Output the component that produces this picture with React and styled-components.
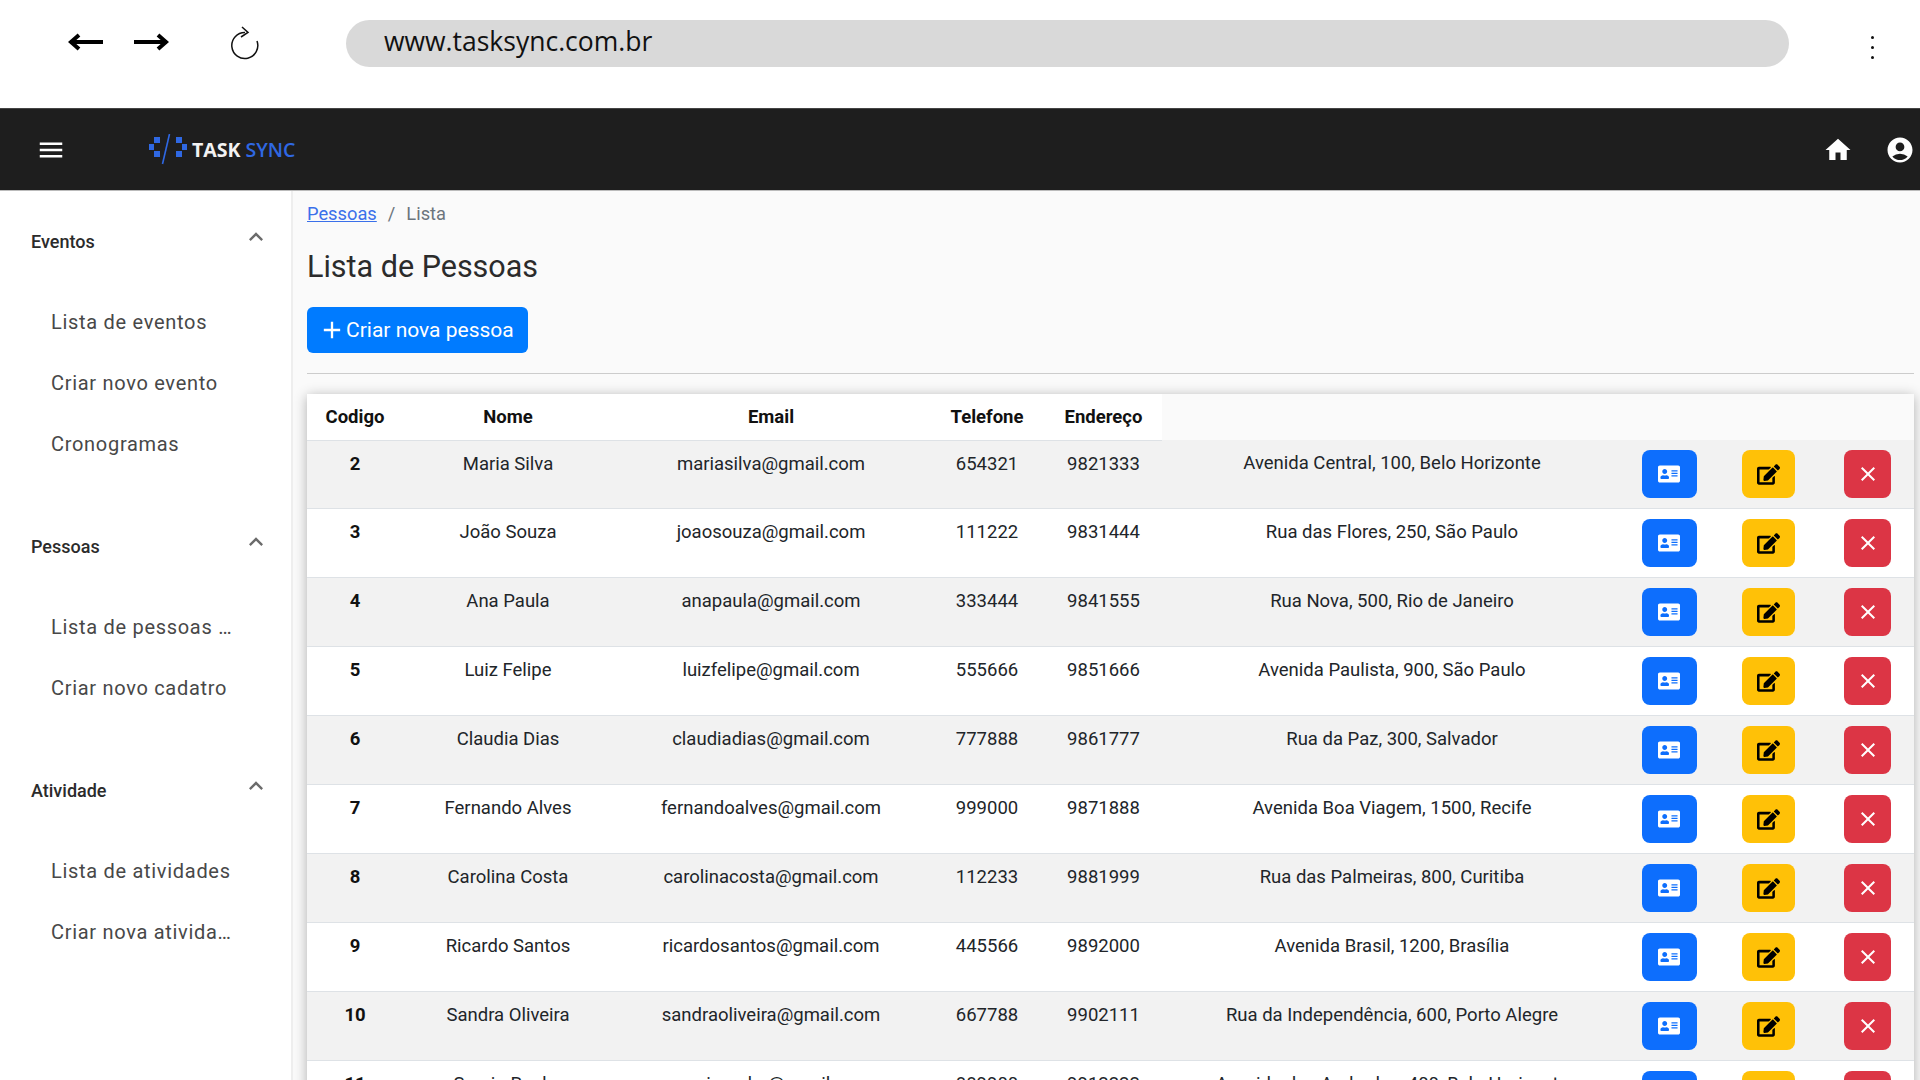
import React from "react";
import styled, { createGlobalStyle } from "styled-components";
import { MdMenu, MdHome, MdAccountCircle, MdExpandLess, MdAdd, MdClose } from "react-icons/md";
import { FaAddressCard, FaEdit } from "react-icons/fa";

const GlobalStyle = createGlobalStyle`
  html, body {
    margin: 0;
    width: 1920px;
    height: 1080px;
    overflow: hidden;
    background: #fff;
    font-family: Roboto, "Liberation Sans", sans-serif;
  }
  * { box-sizing: border-box; }
`;

const BrowserBar = styled.div`
  height: 108px;
  background: #fff;
  display: flex;
  align-items: flex-start;
  padding: 20px 0 0 68px;
`;

const ArrowIcon = styled.svg`
  width: 35px;
  height: 20px;
  margin: 12px 31px 0 0;
  display: block;
`;

const RefreshIcon = styled.svg`
  width: 30px;
  height: 34px;
  margin: 6px 86px 0 30px;
  display: block;
`;

const AddressBar = styled.div`
  width: 1443px;
  height: 47px;
  border-radius: 24px;
  background: #d9d9d9;
  padding-left: 38px;
  font-family: "Open Sans", sans-serif;
  font-size: 26.5px;
  line-height: 42px;
  color: #111;
`;

const Kebab = styled.div`
  margin: 16px 0 0 82px;
  display: flex;
  flex-direction: column;
  gap: 7px;

  span {
    display: block;
    width: 3px;
    height: 3px;
    border-radius: 50%;
    background: #111;
  }
`;

const Navbar = styled.header`
  height: 83px;
  background: #1e1e1e;
  border-top: 1px solid #444;
  border-bottom: 1px solid #bbb;
  display: flex;
  align-items: center;
  color: #fff;
  padding: 0 5px 0 36px;
`;

const Logo = styled.div`
  display: flex;
  align-items: center;
  margin-left: 80px;
  font-family: "Open Sans", sans-serif;
  font-size: 19.5px;
  line-height: 1;
`;

const LogoTask = styled.span`
  font-weight: 700;
  color: #f2f2f2;
  margin-left: 2px;
`;

const LogoSync = styled.span`
  font-weight: 600;
  color: #2f68e3;
  margin-left: 5px;
`;

const NavRight = styled.div`
  margin-left: auto;
  display: flex;
  align-items: center;
  gap: 32px;
`;

const Layout = styled.div`
  display: grid;
  grid-template-columns: 293px 1fr;
  height: 889px;
  overflow: hidden;
`;

const Sidebar = styled.aside`
  background: #fff;
  border-right: 2px solid #eee;
  padding-top: 20px;
`;

const Group = styled.section`
  margin-bottom: 41px;
`;

const GroupHeader = styled.div`
  height: 61px;
  display: flex;
  align-items: center;
  justify-content: space-between;
  padding: 0 21px 0 31px;
  font-size: 18px;
  font-weight: 500;
  color: #2b2b2b;

  svg {
    color: #6b6b6b;
    margin-top: -10px;
  }
`;

const ItemList = styled.ul`
  list-style: none;
  margin: 20px 0 0;
  padding: 0;
`;

const Item = styled.li`
  height: 61px;
  line-height: 61px;
  padding-left: 51px;
  width: 236px;
  font-size: 20px;
  letter-spacing: 0.7px;
  color: #484848;
  white-space: nowrap;
  overflow: hidden;
  text-overflow: ellipsis;
`;

const Main = styled.main`
  background: #fafafa;
  padding: 10px 6px 0 14px;
`;

const Breadcrumb = styled.nav`
  display: flex;
  align-items: center;
  height: 24px;
  font-size: 18.3px;
  color: #6c757d;
`;

const Crumb = styled.a`
  color: #3a70ea;
  text-decoration: underline;
`;

const Slash = styled.span`
  margin: 0 11px;
`;

const Title = styled.h1`
  margin: 24px 0 0;
  font-size: 30.5px;
  line-height: 36px;
  font-weight: 400;
  color: #2b2b2b;
`;

const CreateButton = styled.button`
  display: flex;
  align-items: center;
  margin-top: 22px;
  width: 221px;
  height: 46px;
  padding: 0 0 0 11px;
  border: 0;
  border-radius: 6px;
  background: #007bff;
  color: #fff;
  font-family: inherit;
  font-size: 21px;
`;

const Divider = styled.hr`
  margin: 20px 0 20px;
  border: 0;
  border-top: 1px solid #ccc;
`;

const Table = styled.table`
  width: 1607px;
  table-layout: fixed;
  border-collapse: collapse;
  box-shadow: 0 2px 12px rgba(0, 0, 0, 0.3);
  font-size: 18.5px;
  color: #212529;
`;

const Col = styled.col`
  width: ${(p) => p.$w}px;
`;

const Th = styled.th`
  height: 46px;
  padding: 0;
  background: #fff;
  border-bottom: 1px solid #dee2e6;
  font-weight: 700;
  color: #111;
  text-align: center;
`;

const Row = styled.tr`
  background: ${(p) => (p.$odd ? "#f2f2f2" : "#fff")};
  border-bottom: 1px solid #dee2e6;
`;

const Td = styled.td`
  height: 68px;
  padding: 11px 0 0;
  line-height: 24px;
  text-align: center;
  vertical-align: top;
  font-weight: ${(p) => (p.$bold ? 700 : 400)};
  color: ${(p) => (p.$bold ? "#111" : "inherit")};
`;

const ActionCell = styled.td`
  padding: 10px 0;
  text-align: center;
  vertical-align: top;
`;

const kinds = {
  view: { bg: "#0d6efd", color: "#fff", width: 55 },
  edit: { bg: "#ffc107", color: "#000", width: 53 },
  remove: { bg: "#dc3545", color: "#fff", width: 47 },
};

const ActionButton = styled.button`
  width: ${(p) => kinds[p.$kind].width}px;
  height: 48px;
  border: 0;
  border-radius: 8px;
  padding: 0;
  display: inline-flex;
  align-items: center;
  justify-content: center;
  background: ${(p) => kinds[p.$kind].bg};
  color: ${(p) => kinds[p.$kind].color};
`;

const menu = [
  { title: "Eventos", items: ["Lista de eventos", "Criar novo evento", "Cronogramas"] },
  { title: "Pessoas", items: ["Lista de pessoas cadastradas", "Criar novo cadatro"] },
  { title: "Atividade", items: ["Lista de atividades", "Criar nova atividade"] },
];

const people = [
  [2, "Maria Silva", "mariasilva@gmail.com", "654321", "9821333", "Avenida Central, 100, Belo Horizonte"],
  [3, "João Souza", "joaosouza@gmail.com", "111222", "9831444", "Rua das Flores, 250, São Paulo"],
  [4, "Ana Paula", "anapaula@gmail.com", "333444", "9841555", "Rua Nova, 500, Rio de Janeiro"],
  [5, "Luiz Felipe", "luizfelipe@gmail.com", "555666", "9851666", "Avenida Paulista, 900, São Paulo"],
  [6, "Claudia Dias", "claudiadias@gmail.com", "777888", "9861777", "Rua da Paz, 300, Salvador"],
  [7, "Fernando Alves", "fernandoalves@gmail.com", "999000", "9871888", "Avenida Boa Viagem, 1500, Recife"],
  [8, "Carolina Costa", "carolinacosta@gmail.com", "112233", "9881999", "Rua das Palmeiras, 800, Curitiba"],
  [9, "Ricardo Santos", "ricardosantos@gmail.com", "445566", "9892000", "Avenida Brasil, 1200, Brasília"],
  [10, "Sandra Oliveira", "sandraoliveira@gmail.com", "667788", "9902111", "Rua da Independência, 600, Porto Alegre"],
  [11, "Sergio Rocha", "sergiorocha@gmail.com", "889900", "9912222", "Avenida dos Andradas, 400, Belo Horizonte"],
];

const widths = [96, 210, 316, 116, 117, 460, 94, 105, 93];
const headers = ["Codigo", "Nome", "Email", "Telefone", "Endereço"];

const App = () => {
  return (
    <>
      <GlobalStyle />
      <BrowserBar>
        <ArrowIcon viewBox="0 0 35 20" fill="none" stroke="#000" strokeWidth="4">
          <path d="M3 10H35M11 3L3 10L11 17" />
        </ArrowIcon>
        <ArrowIcon viewBox="0 0 35 20" fill="none" stroke="#000" strokeWidth="4">
          <path d="M0 10H32M24 3L32 10L24 17" />
        </ArrowIcon>
        <RefreshIcon viewBox="0 0 30 34" fill="none" stroke="#111" strokeWidth="1.5">
          <path d="M27 15A13 13 0 1 1 15 6.5" />
          <path d="M12 1L18 6.5L11 11" />
        </RefreshIcon>
        <AddressBar>www.tasksync.com.br</AddressBar>
        <Kebab>
          <span />
          <span />
          <span />
        </Kebab>
      </BrowserBar>
      <Navbar>
        <MdMenu size={30} />
        <Logo>
          <svg width="44" height="32" viewBox="0 0 44 32">
            <g fill="#2f68e3">
              <rect x="8" y="3" width="6" height="6" />
              <rect x="3" y="10" width="5" height="6" />
              <rect x="8" y="17" width="6" height="6" />
              <rect x="30" y="3" width="6" height="6" />
              <rect x="36" y="10" width="5" height="6" />
              <rect x="30" y="17" width="6" height="6" />
            </g>
            <path d="M23.5 0L16.5 30" stroke="#2f68e3" strokeWidth="1.6" />
          </svg>
          <LogoTask>TASK</LogoTask>
          <LogoSync>SYNC</LogoSync>
        </Logo>
        <NavRight>
          <MdHome size={30} />
          <MdAccountCircle size={30} />
        </NavRight>
      </Navbar>
      <Layout>
        <Sidebar>
          {menu.map((group) => (
            <Group key={group.title}>
              <GroupHeader>
                {group.title}
                <MdExpandLess size={28} />
              </GroupHeader>
              <ItemList>
                {group.items.map((item) => (
                  <Item key={item}>{item}</Item>
                ))}
              </ItemList>
            </Group>
          ))}
        </Sidebar>
        <Main>
          <Breadcrumb>
            <Crumb>Pessoas</Crumb>
            <Slash>/</Slash>
            Lista
          </Breadcrumb>
          <Title>Lista de Pessoas</Title>
          <CreateButton>
            <MdAdd size={28} />
            Criar nova pessoa
          </CreateButton>
          <Divider />
          <Table>
            <colgroup>
              {widths.map((w, i) => (
                <Col key={i} $w={w} />
              ))}
            </colgroup>
            <thead>
              <tr>
                {headers.map((h) => (
                  <Th key={h}>{h}</Th>
                ))}
              </tr>
            </thead>
            <tbody>
              {people.map((p, i) => (
                <Row key={p[0]} $odd={i % 2 === 0}>
                  {p.map((value, j) => (
                    <Td key={j} $bold={j === 0}>
                      {value}
                    </Td>
                  ))}
                  <ActionCell>
                    <ActionButton $kind="view">
                      <FaAddressCard size={22} />
                    </ActionButton>
                  </ActionCell>
                  <ActionCell>
                    <ActionButton $kind="edit">
                      <FaEdit size={23} />
                    </ActionButton>
                  </ActionCell>
                  <ActionCell>
                    <ActionButton $kind="remove">
                      <MdClose size={24} />
                    </ActionButton>
                  </ActionCell>
                </Row>
              ))}
            </tbody>
          </Table>
        </Main>
      </Layout>
    </>
  );
};

export default App;
